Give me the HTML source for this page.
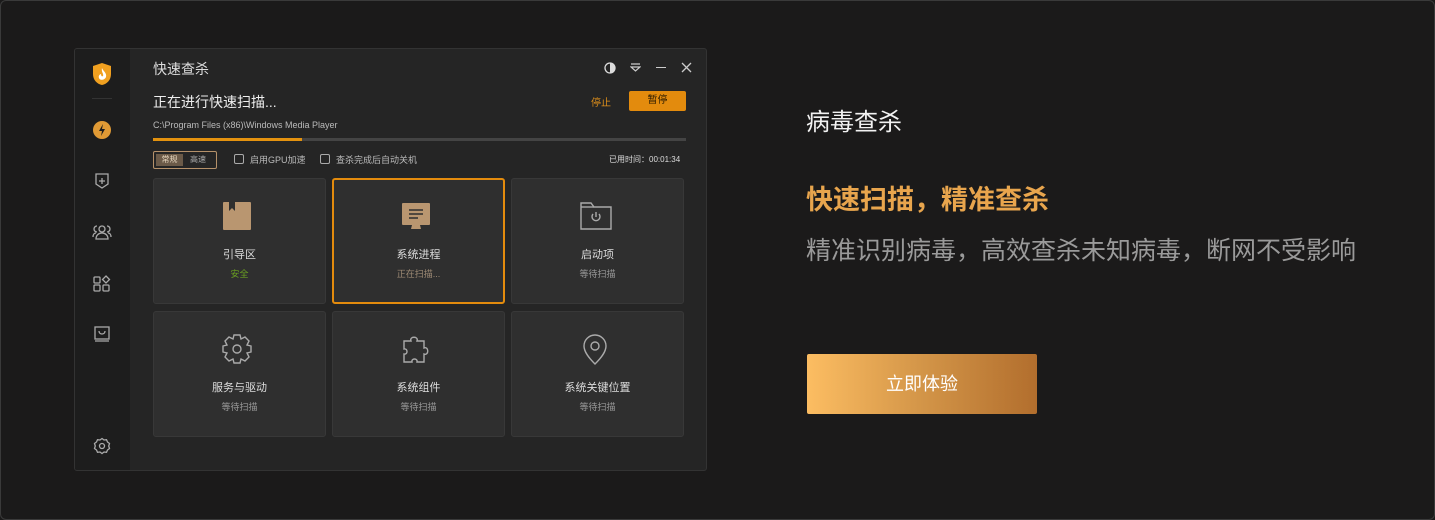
<!DOCTYPE html>
<html><head><meta charset="utf-8"><style>
*{margin:0;padding:0;box-sizing:border-box}
body{width:1435px;height:520px;background:#1b1a1a;font-family:"Liberation Sans","Noto Sans CJK SC",sans-serif;position:relative;overflow:hidden}
.frame{position:absolute;left:0;top:0;width:1435px;height:520px;border:1px solid #3a3a3a;border-radius:6px}
.win{position:absolute;left:74px;top:48px;width:633px;height:423px;background:#252525;border:1px solid #333;border-radius:3px;overflow:hidden}
.side{position:absolute;left:0;top:0;width:55px;height:100%;background:#1d1d1d}
.abs{position:absolute}
.t{color:#ddd;white-space:nowrap}
.card{position:absolute;width:173px;height:126px;background:#2f2f2f;border:1px solid #383838;border-radius:3px;text-align:center}
.card .n{position:absolute;top:67px;width:100%;font-size:11px;color:#ddd}
.card .s{position:absolute;top:88px;width:100%;font-size:9px;color:#999}
.card svg{position:absolute;left:68px;top:22px}
</style></head><body>
<div class="frame"></div>
<div class="win">
 <div class="side">
  <svg class="abs" style="left:17px;top:13px" width="20" height="24" viewBox="0 0 20 24"><path d="M10 1L19 4v8c0 6-4 10-9 11C5 22 1 18 1 12V4z" fill="#f0a020"/><path d="M10 6c1 3 5 5 4 9-1 3-6 4-7 1-1-2 1-4 2-4 0 2 1 3 2 2 1-2-2-4-1-8z" fill="#fff"/></svg>
  <div class="abs" style="left:17px;top:49px;width:20px;height:1px;background:#333"></div>
  <svg class="abs" style="left:18px;top:72px" width="18" height="18" viewBox="0 0 18 18"><circle cx="9" cy="9" r="9" fill="#e09a35"/><path d="M10 3L6 10h3l-1 5 4-7H9z" fill="#1d1d1d"/></svg>
  <svg class="abs" style="left:18px;top:123px" width="18" height="18" viewBox="0 0 18 18" fill="none" stroke="#aaa" stroke-width="1.3"><path d="M3 2h12v10l-6 4-6-4z"/><path d="M9 6v6M6 9h6"/></svg>
  <svg class="abs" style="left:17px;top:174px" width="20" height="18" viewBox="0 0 20 18" fill="none" stroke="#aaa" stroke-width="1.3"><circle cx="10" cy="6" r="3"/><path d="M4 16c0-4 3-6 6-6s6 2 6 6z"/><path d="M5 3a3 3 0 0 0 0 6M15 3a3 3 0 0 1 0 6M1 14c0-2 1-4 3-4M19 14c0-2-1-4-3-4"/></svg>
  <svg class="abs" style="left:18px;top:226px" width="18" height="18" viewBox="0 0 18 18" fill="none" stroke="#aaa" stroke-width="1.3"><rect x="1" y="2" width="6" height="6" rx="1"/><rect x="1" y="10" width="6" height="6" rx="1"/><rect x="10" y="10" width="6" height="6" rx="1"/><path d="M13 1l3.5 3.5L13 8 9.5 4.5z"/></svg>
  <svg class="abs" style="left:18px;top:276px" width="18" height="18" viewBox="0 0 18 18" fill="none" stroke="#aaa" stroke-width="1.3"><rect x="2" y="2" width="14" height="12"/><path d="M2 16h14M6 6c0 4 6 4 6 0"/></svg>
  <svg class="abs" style="left:18px;top:388px" width="18" height="18" viewBox="0 0 18 18" fill="none" stroke="#aaa" stroke-width="1.3"><path d="M9 1.5l2 1.5 2.5-.3 1 2.3 2 1.5-.8 2.5.8 2.5-2 1.5-1 2.3-2.5-.3-2 1.5-2-1.5-2.5.3-1-2.3-2-1.5.8-2.5L1.5 6.5l2-1.5 1-2.3L7 3z"/><circle cx="9" cy="9" r="2.5"/></svg>
 </div>
 <div class="abs t" style="left:78px;top:10px;font-size:14px;color:#ddd">快速查杀</div>
 <svg class="abs" style="left:529px;top:13px" width="12" height="12" viewBox="0 0 12 12"><circle cx="6" cy="6" r="5" fill="none" stroke="#ddd" stroke-width="1.3"/><path d="M6 1a5 5 0 0 1 0 10z" fill="#ddd"/></svg>
 <svg class="abs" style="left:555px;top:14px" width="11" height="10" viewBox="0 0 11 10" fill="none" stroke="#ccc" stroke-width="1.2"><path d="M1 1h9M1 4h9l-4.5 4z"/></svg>
 <div class="abs" style="left:581px;top:18px;width:10px;height:1.3px;background:#ccc"></div>
 <svg class="abs" style="left:606px;top:13px" width="11" height="11" viewBox="0 0 11 11" stroke="#ccc" stroke-width="1.3"><path d="M1 1l9 9M10 1l-9 9"/></svg>
 <div class="abs t" style="left:78px;top:43px;font-size:14px;color:#eee">正在进行快速扫描...</div>
 <div class="abs t" style="left:516px;top:45px;font-size:10px;color:#e0901a">停止</div>
 <div class="abs" style="left:554px;top:42px;width:57px;height:20px;background:#e38b0d;border-radius:2px;color:#2a1a00;font-size:10px;text-align:center;line-height:20px">暂停</div>
 <div class="abs t" style="left:78px;top:71px;font-size:9px;color:#bbb">C:\Program Files (x86)\Windows Media Player</div>
 <div class="abs" style="left:78px;top:89px;width:533px;height:3px;background:#444"></div>
 <div class="abs" style="left:78px;top:89px;width:149px;height:3px;background:#e3920f"></div>
 <div class="abs" style="left:78px;top:102px;width:64px;height:18px;border:1px solid #b5916a;border-radius:2px"></div>
 <div class="abs" style="left:81px;top:105px;width:27px;height:12px;background:#6b5a48;color:#e8d8c0;font-size:8px;text-align:center;line-height:12px">常规</div>
 <div class="abs t" style="left:115px;top:105px;font-size:8px;color:#aaa;line-height:12px">高速</div>
 <div class="abs" style="left:159px;top:105px;width:10px;height:10px;border:1px solid #aaa;border-radius:2px"></div>
 <div class="abs t" style="left:175px;top:104px;font-size:9px;color:#bbb">启用GPU加速</div>
 <div class="abs" style="left:245px;top:105px;width:10px;height:10px;border:1px solid #aaa;border-radius:2px"></div>
 <div class="abs t" style="left:261px;top:104px;font-size:9px;color:#bbb">查杀完成后自动关机</div>
 <div class="abs t" style="left:534px;top:105px;font-size:8px;color:#ddd">已用时间：00:01:34</div>

 <div class="card" style="left:78px;top:129px">
  <svg width="30" height="30" viewBox="0 0 30 30"><rect x="1" y="1" width="28" height="28" rx="1" fill="#b99670"/><path d="M7 1v9l3-3 3 3V1" fill="#2f2f2f"/></svg>
  <div class="n">引导区</div><div class="s" style="color:#6aa021">安全</div></div>
 <div class="card" style="left:257px;top:129px;border:2px solid #e38b0d">
  <svg width="30" height="30" viewBox="0 0 30 30" style="left:67px;top:21px"><rect x="1" y="2" width="28" height="22" rx="1" fill="#b99670"/><path d="M11 24h8l1 4H10z" fill="#b99670"/><path d="M8 9h14M8 13h14M8 17h9" stroke="#2f2f2f" stroke-width="1.6"/></svg>
  <div class="n" style="top:66px">系统进程</div><div class="s" style="top:87px;color:#9d8a74">正在扫描...</div></div>
 <div class="card" style="left:436px;top:129px">
  <svg width="32" height="30" viewBox="0 0 32 30" fill="none" stroke="#aaa" stroke-width="1.4"><path d="M1 2h10l3 4h17v22H1z"/><path d="M1 6h13"/><path d="M13 13a4 4 0 1 0 6 0M16 11v5"/></svg>
  <div class="n">启动项</div><div class="s">等待扫描</div></div>
 <div class="card" style="left:78px;top:262px">
  <svg width="30" height="30" viewBox="0 0 30 30" fill="none" stroke="#aaa" stroke-width="1.4"><path d="M12 1h6l1 4 4-2 4 4-2 4 4 1v6l-4 1 2 4-4 4-4-2-1 4h-6l-1-4-4 2-4-4 2-4-4-1v-6l4-1-2-4 4-4 4 2z"/><circle cx="15" cy="15" r="4"/></svg>
  <div class="n">服务与驱动</div><div class="s">等待扫描</div></div>
 <div class="card" style="left:257px;top:262px">
  <svg width="30" height="30" viewBox="0 0 30 30" fill="none" stroke="#aaa" stroke-width="1.4"><path d="M3 7h7c-2-5 8-5 6 0h7v7c5-2 5 8 0 6v8h-7c1-4-6-4-5 0H3v-8c4 1 4-6 0-5z"/></svg>
  <div class="n">系统组件</div><div class="s">等待扫描</div></div>
 <div class="card" style="left:436px;top:262px">
  <svg width="30" height="32" viewBox="0 0 30 32" fill="none" stroke="#aaa" stroke-width="1.4"><path d="M15 30C9 24 4 18 4 12a11 11 0 0 1 22 0c0 6-5 12-11 18z"/><circle cx="15" cy="12" r="4"/></svg>
  <div class="n">系统关键位置</div><div class="s">等待扫描</div></div>
</div>

<div class="abs t" style="left:806px;top:102px;font-size:24px;color:#f2f2f2">病毒查杀</div>
<div class="abs t" style="left:806px;top:178px;font-size:27px;font-weight:bold;color:#e8a54d">快速扫描，精准查杀</div>
<div class="abs t" style="left:806px;top:231px;font-size:25px;color:#9a9a9a">精准识别病毒，高效查杀未知病毒，断网不受影响</div>
<div class="abs" style="left:807px;top:354px;width:230px;height:60px;background:linear-gradient(90deg,#fcbd62,#d39548 50%,#b26e2d);border-radius:2px;color:#fff;font-size:18px;text-align:center;line-height:60px">立即体验</div>
</body></html>
